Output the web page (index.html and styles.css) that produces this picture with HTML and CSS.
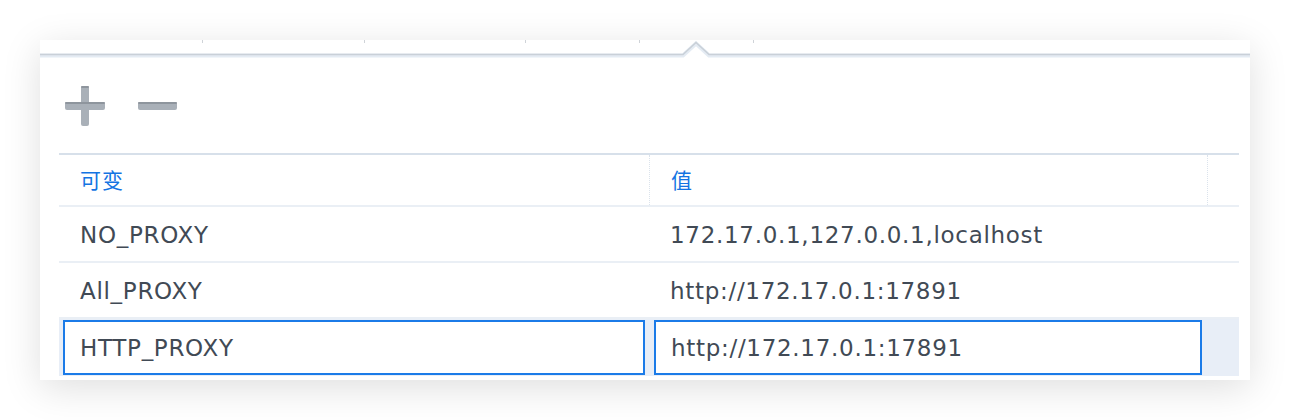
FILE: index.html
```html
<!DOCTYPE html>
<html lang="zh">
<head>
<meta charset="utf-8">
<title>环境变量</title>
<link rel="stylesheet" href="styles.css">
</head>
<body>
<div class="panel">
  <div class="tabstrip">
    <div class="ticks">
      <span class="tick t1"></span><span class="tick t2"></span><span class="tick t3"></span><span class="tick t4"></span><span class="tick t5"></span>
    </div>
    <svg class="tabline" width="1210" height="20" viewBox="0 0 1210 20">
      <path d="M0 15.5 H643 L656 3.5 L669 15.5 H1210" fill="none" stroke="#e4ebf3" stroke-width="4"/>
      <path d="M0 14.5 H643 L656 2.5 L669 14.5 H1210" fill="none" stroke="#c9d0d8" stroke-width="1.6"/>
    </svg>
  </div>
  <div class="toolbar">
    <button class="tool" aria-label="添加">
      <svg width="40" height="40" viewBox="0 0 40 40">
        <rect x="16" y="0" width="8" height="40" rx="2" fill="#a9b0b8"/>
        <rect x="0" y="16" width="40" height="8" rx="2" fill="#a9b0b8"/>
        <rect x="0" y="16" width="40" height="2" rx="1" fill="#8e959d"/>
        <rect x="16" y="0" width="8" height="2" rx="1" fill="#8e959d"/>
      </svg>
    </button>
    <button class="tool" aria-label="删除">
      <svg width="40" height="40" viewBox="0 0 40 40">
        <rect x="0" y="16" width="39" height="8" rx="2" fill="#a9b0b8"/>
        <rect x="0" y="16" width="39" height="2" rx="1" fill="#8e959d"/>
      </svg>
    </button>
  </div>
  <div class="table">
    <div class="row head">
      <div class="cell">可变</div>
      <div class="cell sep">值</div>
      <div class="cell sep"></div>
    </div>
    <div class="row">
      <div class="cell">NO_PROXY</div>
      <div class="cell">172.17.0.1,127.0.0.1,localhost</div>
      <div class="cell"></div>
    </div>
    <div class="row">
      <div class="cell">All_PROXY</div>
      <div class="cell">http://172.17.0.1:17891</div>
      <div class="cell"></div>
    </div>
    <div class="row selected">
      <div class="cell edit"><input class="field f1" value="HTTP_PROXY"></div>
      <div class="cell edit"><input class="field f2" value="http://172.17.0.1:17891"></div>
      <div class="cell"></div>
    </div>
  </div>
</div>
</body>
</html>
```

FILE: styles.css
```css
html, body {
  margin: 0;
  padding: 0;
  background: #ffffff;
}
body {
  width: 1290px;
  height: 420px;
  overflow: hidden;
  padding-top: 40px;
  padding-left: 40px;
  box-sizing: border-box;
  font-family: "DejaVu Sans", "Noto Sans CJK SC", sans-serif;
}
.panel {
  width: 1210px;
  height: 340px;
  background: #ffffff;
  box-shadow: 0 8px 36px rgba(0, 0, 0, 0.13);
  overflow: hidden;
}
.tabstrip {
  position: relative;
  height: 20px;
}
.ticks {
  position: absolute;
  left: 0;
  top: 0;
  width: 100%;
  height: 3px;
}
.tick {
  position: absolute;
  top: 0;
  width: 1px;
  height: 3px;
  background: #cfd3d8;
}
.t1 { left: 162px; }
.t2 { left: 324px; }
.t3 { left: 485px; }
.t4 { left: 599px; }
.t5 { left: 713px; }
.tabline {
  display: block;
}
.toolbar {
  display: flex;
  gap: 33px;
  padding: 26px 0 0 25px;
  height: 40px;
}
.tool {
  border: 0;
  padding: 0;
  margin: 0;
  background: none;
  width: 40px;
  height: 40px;
}
.tool svg {
  display: block;
}
.table {
  margin: 27px 11px 0 19px;
  border-top: 2px solid #d7e0ea;
}
.row {
  display: grid;
  grid-template-columns: 590px 558px 32px;
  height: 54px;
  border-bottom: 2px solid #eaeff5;
  color: #414a55;
  font-size: 23px;
  letter-spacing: 0.7px;
}
.row .cell {
  padding-top: 2px;
}
.row.head {
  height: 50px;
  color: #1474e2;
  font-size: 21px;
  letter-spacing: 1px;
}
.row.head .cell {
  padding-top: 0;
  padding-bottom: 3px;
}
.row.selected {
  border-bottom: 0;
  height: 57px;
  background: #e8eef7;
}
.cell {
  display: flex;
  align-items: center;
  padding-left: 21px;
  white-space: nowrap;
}
.cell.sep {
  border-left: 1px dotted #dbe3ec;
}
.row .cell.edit {
  padding: 1px 0 0 4px;
  align-items: flex-start;
}
.row.selected .cell:nth-child(2) {
  padding-left: 5px;
}
.field {
  box-sizing: border-box;
  height: 55px;
  border: 2px solid #1b7be8;
  background: #ffffff;
  font-family: "DejaVu Sans", sans-serif;
  font-size: 23px;
  letter-spacing: 0.7px;
  color: #414a55;
  padding: 0 0 0 15px;
  outline: none;
}
.f1 { width: 582px; }
.f2 { width: 548px; padding-left: 15px; }
```
